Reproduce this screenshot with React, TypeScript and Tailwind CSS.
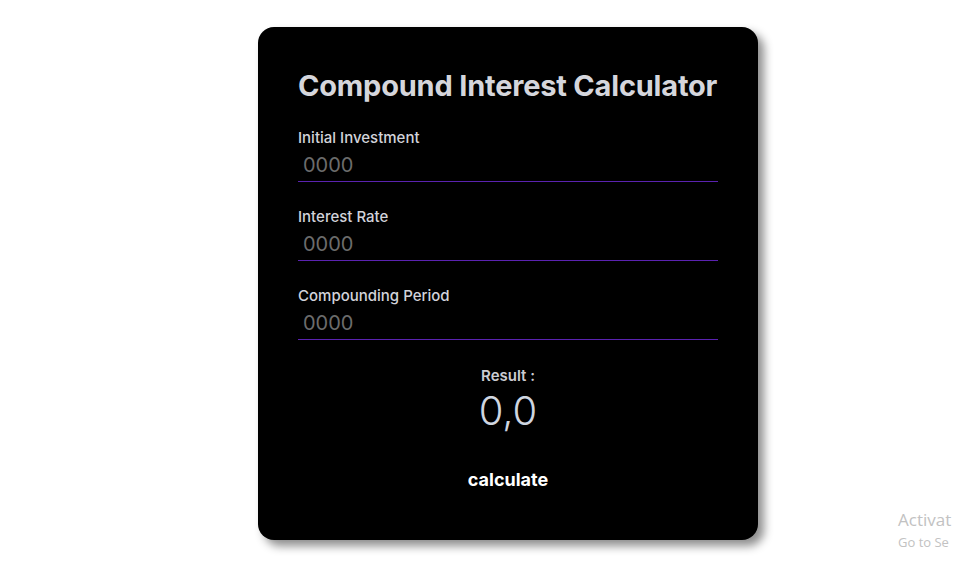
import { useState } from "react";

const fields = [
  { key: "principal", label: "Initial Investment" },
  { key: "rate", label: "Interest Rate" },
  { key: "period", label: "Compounding Period" },
];

export default function App() {
  const [values, setValues] = useState<Record<string, string>>({});
  const [result, setResult] = useState("0,0");

  const calculate = () => {
    const p = Number(values.principal || 0);
    const r = Number(values.rate || 0) / 100;
    const n = Number(values.period || 0);
    const total = p * Math.pow(1 + r, n);
    setResult(total.toFixed(1).replace(".", ","));
  };

  return (
    <div className="relative h-screen w-screen overflow-hidden bg-white font-['Inter','Liberation_Sans',sans-serif]">
      <div className="ml-[258px] mt-[27px] w-[500px] rounded-[16px] bg-black px-10 pt-[41px] pb-[46px] shadow-[6px_6px_10px_rgba(0,0,0,0.45)]">
        <h1 className="whitespace-nowrap text-[29px] font-bold leading-[36px] tracking-[-0.2px] text-[#d5d6dc]">
          Compound Interest Calculator
        </h1>

        <div className="mt-[24px] flex flex-col gap-[25px]">
          {fields.map((f) => (
            <div key={f.key} className="flex flex-col gap-[1px]">
              <label className="text-[15px] font-medium leading-[20px] text-[#d2d3da]">
                {f.label}
              </label>
              <input
                className="h-[33px] w-full border-b border-[#5a22b0] bg-transparent px-[5px] text-[20px] leading-[28px] text-[#d2d3da] outline-none placeholder:text-[#6c6c6c]"
                placeholder="0000"
                value={values[f.key] || ""}
                onChange={(e) => setValues({ ...values, [f.key]: e.target.value })}
              />
            </div>
          ))}
        </div>

        {/* Result */}
        <div className="mt-[24px] flex flex-col items-center">
          <span className="text-[15px] font-semibold leading-[24px] text-[#cbccd2]">Result :</span>
          <span className="text-[40px] font-light leading-[45px] text-[#cfd6e0]">{result}</span>
        </div>

        <div className="mt-[33px] flex justify-center">
          <button
            className="text-[18px] font-bold leading-[28px] text-white"
            onClick={calculate}
          >
            calculate
          </button>
        </div>
      </div>

      {/* Windows activation watermark, cut by the screen edge */}
      <div className="absolute left-[898px] top-[508px] whitespace-nowrap font-['Open_Sans','Noto_Sans',sans-serif] text-[#c2c2c2]">
        <div className="text-[17px] leading-[24px]">Activat</div>
        <div className="text-[13px] leading-[20px]">Go to Se</div>
      </div>
    </div>
  );
}
